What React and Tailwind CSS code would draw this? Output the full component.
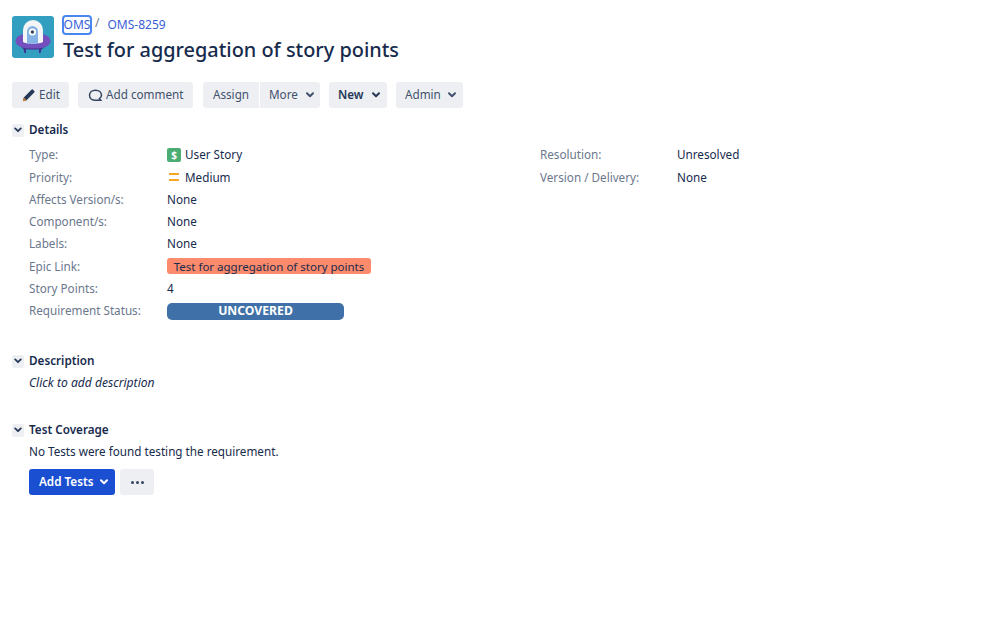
const font = { fontFamily: '"Noto Sans", sans-serif' };

function Chevron({ color = '#42526e' }) {
  return (
    <svg width="10" height="8" viewBox="0 0 10 8" fill="none" stroke={color} strokeWidth="2" strokeLinecap="round" strokeLinejoin="round" className="shrink-0">
      <path d="M2 2.2l3 3 3-3" />
    </svg>
  );
}

function Btn({ children, className = '' }) {
  return (
    <div className={`flex h-[26px] items-center rounded-[3px] bg-[#eeeff2] text-[11.7px] text-[#42526e] ${className}`}>
      {children}
    </div>
  );
}

function Row({ label, children, labelWidth = 'w-[138px]' }) {
  return (
    <div className="flex h-[22.25px] items-center text-[11.7px]">
      <div className={`${labelWidth} shrink-0 text-[#6b778c]`}>{label}</div>
      <div className="flex items-center text-[#172b4d]">{children}</div>
    </div>
  );
}

function Section({ title, children, className = '' }) {
  return (
    <section className={className}>
      <div className="flex h-[20px] items-center">
        <div className="flex h-[13px] w-[12px] items-center justify-center rounded-[2px] bg-[#eeeff2]">
          <svg width="8" height="6" viewBox="0 0 8 6" fill="none" stroke="#253858" strokeWidth="1.8" strokeLinecap="round" strokeLinejoin="round">
            <path d="M1.2 1.4L4 4.2l2.8-2.8" />
          </svg>
        </div>
        <h2 className="ml-[5px] text-[11.7px] font-semibold text-[#172b4d]">{title}</h2>
      </div>
      <div className="pl-[17px]">{children}</div>
    </section>
  );
}

function ProjectAvatar() {
  return (
    <svg width="42" height="42" viewBox="0 0 42 42" className="shrink-0">
      <rect width="42" height="42" rx="3" fill="#339fc0" />
      <path d="M11 31h3v6h-1.6zM30 31h-3v6h1.6z" fill="#403294" />
      <ellipse cx="21" cy="25" rx="17.6" ry="8.4" fill="#7350bd" />
      <path d="M9 31.2c4 1.8 20 1.8 24 0-2 2-6 2.4-12 2.4s-10-.4-12-2.4z" fill="#403294" />
      <path d="M11 26V14a10 10 0 0 1 20 0v12c-3 2.2-17 2.2-20 0z" fill="#f4f5f7" />
      <path d="M15 27.4V15.5a5.4 5.4 0 0 1 11 0v11.9c-3 .6-8 .6-11 0z" fill="#85b3e6" />
      <circle cx="20.4" cy="16" r="3.6" fill="#ffffff" />
      <circle cx="20.4" cy="16" r="1.7" fill="#344563" />
    </svg>
  );
}

export default function App() {
  return (
    <div className="min-h-[624px] w-[999px] bg-white pl-3 pt-[15px]" style={font}>
      <header className="flex items-start">
        <div className="pt-px"><ProjectAvatar /></div>
        <div className="ml-[8px]">
          <div className="flex h-[20px] items-center text-[12px] text-[#3b5fd9]">
            <span className="flex h-[20px] w-[30px] items-center justify-center rounded-[4px] border-2 border-[#4a86f0]">OMS</span>
            <span className="mb-[5px] ml-[3px] mr-[8px] text-[#6b778c]">/</span>
            <span>OMS-8259</span>
          </div>
          <h1 className="ml-px text-[19.9px] font-medium leading-[30px] text-[#172b4d]">
            Test for aggregation of story points
          </h1>
        </div>
      </header>

      <div className="mt-[17px] flex items-center">
        <Btn className="w-[57px] pl-[10px]">
          <svg width="14" height="14" viewBox="0 0 14 14" className="shrink-0">
            <path d="M.8 13.2l1-3.8 7.6-7.6a1.2 1.2 0 0 1 1.7 0l1.1 1.1a1.2 1.2 0 0 1 0 1.7L4.6 12.2z" fill="#253858" />
            <path d="M.8 13.2l1-3.8 2.8 2.8z" fill="#c9822e" />
          </svg>
          <span className="ml-[3px]">Edit</span>
        </Btn>
        <Btn className="ml-[9px] w-[115px] pl-[10px]">
          <svg width="15" height="15" viewBox="0 0 15 15" fill="none" stroke="#344563" strokeWidth="1.5" className="shrink-0">
            <path d="M7.5 2.2c-3.4 0-6 2.2-6 5.1 0 2.9 2.6 5 6 5h5.2l-1.3-1.6c1.3-.9 2.1-2 2.1-3.4 0-2.9-2.6-5.1-6-5.1z" />
          </svg>
          <span className="ml-[3px]">Add comment</span>
        </Btn>
        <Btn className="ml-[10px] w-[56px] justify-center rounded-r-none">Assign</Btn>
        <Btn className="ml-px w-[60px] gap-[7px] rounded-l-none pl-[9px]">More <Chevron /></Btn>
        <Btn className="ml-[9px] w-[58px] gap-[7px] bg-[#e0e1e6] pl-[9px] font-semibold text-[#253858]">
          New <Chevron color="#253858" />
        </Btn>
        <Btn className="ml-[9px] w-[67px] gap-[6px] pl-[9px]">Admin <Chevron /></Btn>
      </div>

      <Section title="Details" className="mt-[12px]">
        <div className="mt-[4px] flex">
          <div className="w-[511px]">
            <Row label="Type:">
              <span className="mr-[4px] flex h-[14px] w-[14px] items-center justify-center rounded-[2px] bg-[#4bad73] text-[10px] font-bold text-white">$</span>
              User Story
            </Row>
            <Row label="Priority:">
              <span className="ml-[2px] mr-[6px] flex w-[10px] flex-col gap-[4px]">
                <span className="h-[2px] bg-[#f5a623]" />
                <span className="h-[2px] bg-[#f5a623]" />
              </span>
              Medium
            </Row>
            <Row label="Affects Version/s:">None</Row>
            <Row label="Component/s:">None</Row>
            <Row label="Labels:">None</Row>
            <Row label="Epic Link:">
              <span className="flex h-[16px] w-[204px] items-center justify-center rounded-[3px] bg-[#fc8a6c] text-[11.5px] text-[#172b4d]">
                Test for aggregation of story points
              </span>
            </Row>
            <Row label="Story Points:">4</Row>
            <Row label="Requirement Status:">
              <span className="mt-px flex h-[17px] w-[177px] items-center justify-center rounded-[5px] bg-[#3f71a8] text-[12.2px] font-bold text-white">
                UNCOVERED
              </span>
            </Row>
          </div>
          <div>
            <Row label="Resolution:" labelWidth="w-[137px]">Unresolved</Row>
            <Row label="Version / Delivery:" labelWidth="w-[137px]">None</Row>
          </div>
        </div>
      </Section>

      <Section title="Description" className="mt-[29px]">
        <p className="mt-px text-[12.1px] italic leading-[22px] text-[#172b4d]">Click to add description</p>
      </Section>

      <Section title="Test Coverage" className="mt-[26px]">
        <p className="text-[11.7px] leading-[22px] text-[#172b4d]">No Tests were found testing the requirement.</p>
        <div className="mt-[7px] flex">
          <div className="flex h-[26px] w-[86px] items-center gap-[6px] rounded-[3px] bg-[#1b4fd1] pl-[10px] text-[11.7px] font-semibold text-white">
            Add Tests <Chevron color="#ffffff" />
          </div>
          <Btn className="ml-[5px] w-[34px] justify-center gap-[2px]">
            <span className="h-[3px] w-[3px] rounded-full bg-[#344563]" />
            <span className="h-[3px] w-[3px] rounded-full bg-[#344563]" />
            <span className="h-[3px] w-[3px] rounded-full bg-[#344563]" />
          </Btn>
        </div>
      </Section>
    </div>
  );
}
